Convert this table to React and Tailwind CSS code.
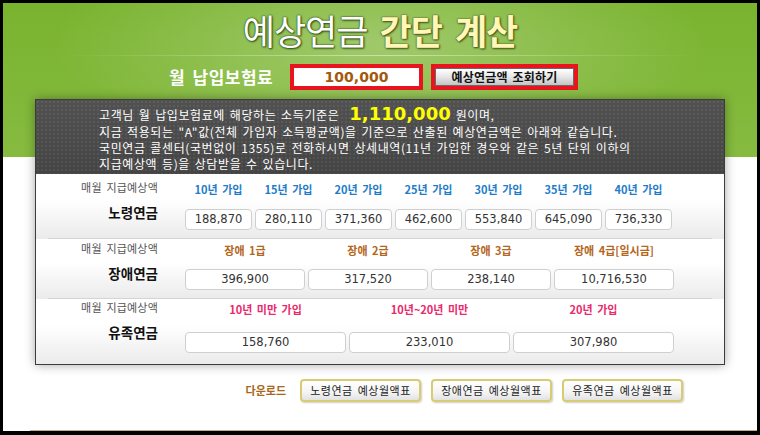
const KR = "font-['Noto_Sans_CJK_KR',sans-serif]"
const NUM = "font-['DejaVu_Sans',sans-serif]"

const sections = [
  {
    name: '노령연금',
    color: 'text-[#1e7cc8]',
    cols: 'grid-cols-[repeat(7,67px)]',
    pad: 'pt-[5px] h-[64px]',
    items: [
      ['10년 가입', '188,870'],
      ['15년 가입', '280,110'],
      ['20년 가입', '371,360'],
      ['25년 가입', '462,600'],
      ['30년 가입', '553,840'],
      ['35년 가입', '645,090'],
      ['40년 가입', '736,330'],
    ],
  },
  {
    name: '장애연금',
    color: 'text-[#b4661c]',
    cols: 'grid-cols-[repeat(4,120px)]',
    pad: 'pt-[1px] h-[59px]',
    items: [
      ['장애 1급', '396,900'],
      ['장애 2급', '317,520'],
      ['장애 3급', '238,140'],
      ['장애 4급[일시금]', '10,716,530'],
    ],
  },
  {
    name: '유족연금',
    color: 'text-[#e92a6c]',
    cols: 'grid-cols-[repeat(3,161px)]',
    pad: 'pt-0 h-[65px]',
    items: [
      ['10년 미만 가입', '158,760'],
      ['10년~20년 미만', '233,010'],
      ['20년 가입', '307,980'],
    ],
  },
]

function Section({ s, last }) {
  return (
    <>
      <div className={`flex bg-[linear-gradient(to_bottom,#ffffff,#ffffff_40%,#ebebeb)] ${s.pad}`}>
        {/* label column */}
        <div className={`w-[122px] shrink-0 flex flex-col items-end ${KR}`}>
          <div className="h-[16px] text-[11px] leading-[16px] tracking-[0.2px] [word-spacing:2px] text-[#555]">매월 지급예상액</div>
          <div className="mt-[7px] text-[13.5px] leading-[20px] font-bold text-[#111]">{s.name}</div>
        </div>
        <div className={`ml-[27px] grid gap-x-[3px] ${s.cols}`}>
          {s.items.map(([h]) => (
            <div key={h} className={`h-[20px] leading-[20px] text-center text-[11px] font-bold [word-spacing:2px] ${KR} ${s.color}`}>{h}</div>
          ))}
          {s.items.map(([h, v]) => (
            <div
              key={h + v}
              className={`mt-[1px] h-[21px] leading-[19px] rounded-[4px] border border-[#cfcfcf] bg-white text-center text-[11.5px] text-[#333] ${NUM}`}
            >
              {v}
            </div>
          ))}
        </div>
      </div>
      {!last && (
        <div className="bg-[#ebebeb]">
          <div className="mx-[12px] h-px bg-[#d4d4d4]" />
        </div>
      )}
    </>
  )
}

export default function App() {
  return (
    <div className="w-[760px] h-[435px] border-[3px] border-b-[4px] border-black bg-white overflow-hidden">
      <div className="relative h-full flex flex-col bg-[radial-gradient(ellipse_330px_110px_at_50%_40px,rgba(255,255,255,0.28),rgba(255,255,255,0)),linear-gradient(to_bottom,#79b32e_0px,#86bb40_154px,#ffffff_154px)]">
        {/* title */}
        <div className={`h-[52px] flex items-center justify-center gap-[12px] pt-[1px] text-[35px] leading-none tracking-[-1px] ${KR}`}>
          <span className="font-normal text-white [text-shadow:0_0_2px_#2f4f10,0_0_1px_#2f4f10,1px_1px_2px_#33501a]">예상연금</span>
          <span className="font-bold text-[#fff6b8] [word-spacing:6px] [text-shadow:0_0_2px_#5a6a20,0_0_1px_#3e4e12,1px_1px_2px_#3a4a14]">간단 계산</span>
        </div>
        <div className="h-px mx-[60px] bg-[linear-gradient(to_right,rgba(255,255,255,0),rgba(255,255,255,0.45),rgba(255,255,255,0))]" />

        {/* input row */}
        <div className="mt-[8px] flex items-center h-[26px]">
          <div className={`ml-[166px] w-[110px] text-[17px] font-bold text-white tracking-[0.5px] [word-spacing:3px] whitespace-nowrap ${KR}`}>월 납입보험료</div>
          <div className="ml-[11px] w-[133px] h-[26px] border-[4px] border-[#e8151e] bg-white flex items-center justify-center">
            <span className={`text-[14px] font-bold text-[#a25a0c] ${NUM}`}>100,000</span>
          </div>
          <div className="ml-[8px] w-[147px] h-[26px] border-[4px] border-[#e8151e] bg-[#e8151e] flex">
            <div className={`flex-1 flex items-center justify-center border border-[#6a6a6a] bg-[linear-gradient(to_bottom,#ffffff,#e6e6e6_50%,#c4c4c4)] text-[12px] font-bold text-[#111] tracking-[0.2px] [word-spacing:2px] whitespace-nowrap ${KR}`}>
              예상연금액 조회하기
            </div>
          </div>
        </div>

        {/* result panel */}
        <div className="mt-[9px] ml-[32px] w-[690px] border border-[#3c3c3c] shadow-[0_0_10px_rgba(0,0,0,0.35)]">
          <div className={`h-[74px] pl-[63px] pt-[6px] text-[12px] leading-[16px] tracking-[0.6px] [word-spacing:1.5px] text-white whitespace-nowrap bg-[radial-gradient(rgba(255,255,255,0.07)_1px,transparent_1px),linear-gradient(to_bottom,#515151,#444444)] bg-[length:4px_4px,100%_100%] ${KR}`}>
            <div className="flex items-baseline h-[18px]">
              <span>고객님 월 납입보험료에 해당하는 소득기준은</span>
              <span className={`ml-[10px] mr-[5px] text-[18px] tracking-normal font-bold text-[#ffff00] ${NUM}`}>1,110,000</span>
              <span>원이며,</span>
            </div>
            <div>지금 적용되는 "A"값(전체 가입자 소득평균액)을 기준으로 산출된 예상연금액은 아래와 같습니다.</div>
            <div>국민연금 콜센터(국번없이 1355)로 전화하시면 상세내역(11년 가입한 경우와 같은 5년 단위 이하의</div>
            <div>지급예상액 등)을 상담받을 수 있습니다.</div>
          </div>
          {sections.map((s, i) => (
            <Section key={s.name} s={s} last={i === sections.length - 1} />
          ))}
        </div>

        {/* download row */}
        <div className="mt-[14px] flex items-center justify-end pr-[74px] gap-[10px]">
          <span className={`mr-[4px] text-[11px] font-bold text-[#a8661c] ${KR}`}>다운로드</span>
          {['노령연금 예상월액표', '장애연금 예상월액표', '유족연금 예상월액표'].map((t) => (
            <div
              key={t}
              className={`w-[121px] h-[23px] flex items-center justify-center rounded-[4px] border-2 border-[#d8cc72] bg-[linear-gradient(to_bottom,#ffffff,#f4f4f4_60%,#e2e2e2)] shadow-[1px_1px_2px_rgba(0,0,0,0.2)] text-[11px] tracking-[0.5px] [word-spacing:2px] whitespace-nowrap text-[#222] ${KR}`}
            >
              {t}
            </div>
          ))}
        </div>

        <div className="mt-auto ml-[27px] h-px bg-[#c9a98f]" />
      </div>
    </div>
  )
}
